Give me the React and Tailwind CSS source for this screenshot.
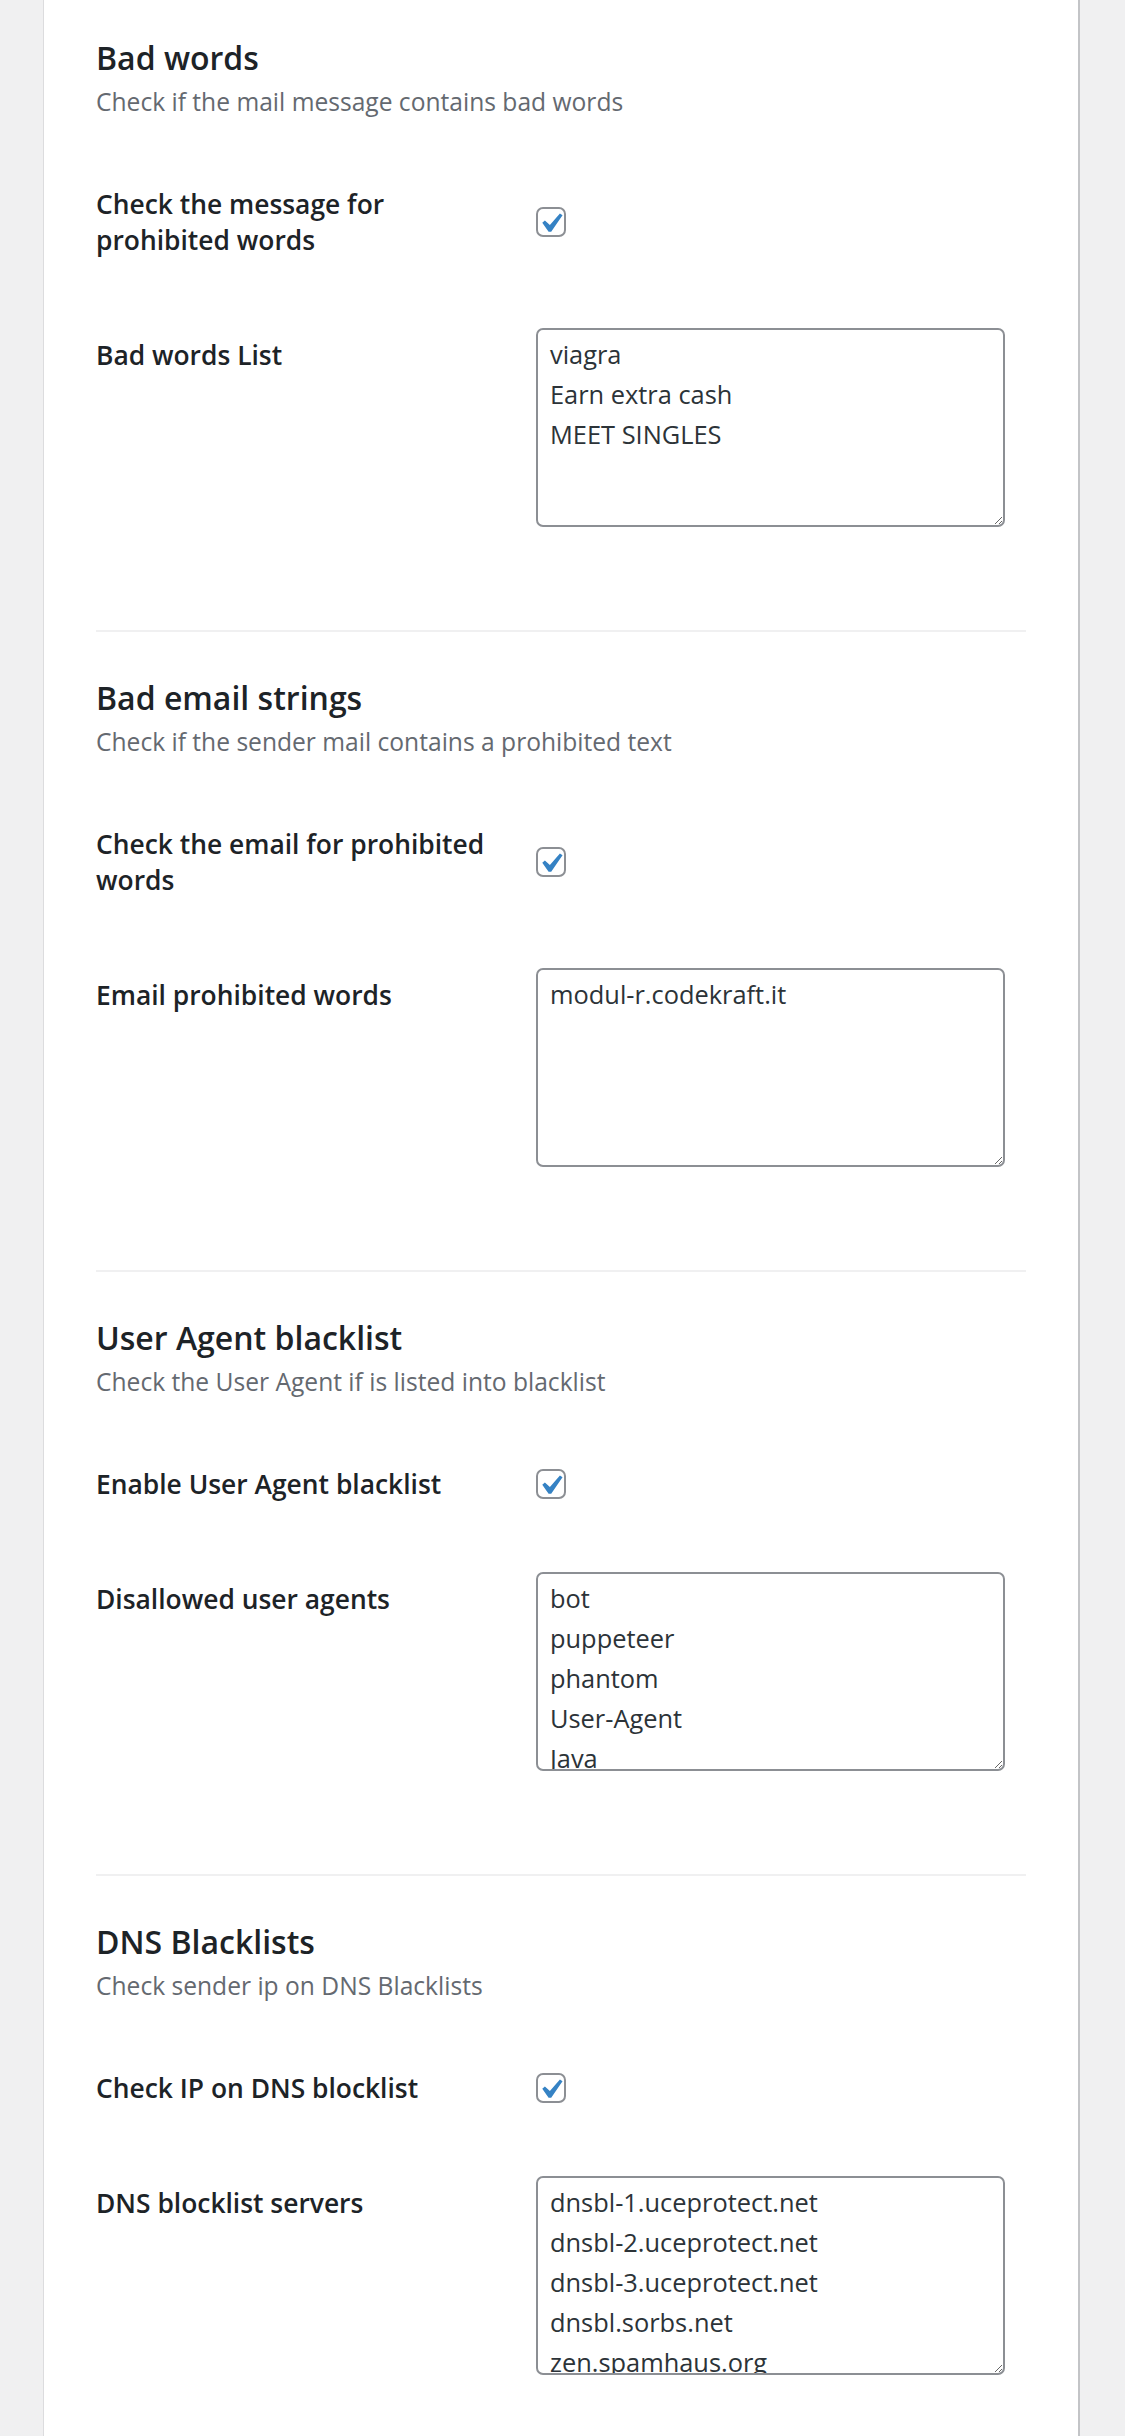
import { useState } from 'react'

const sections = [
    {
        title: 'Bad words',
        description: 'Check if the mail message contains bad words',
        checkLabel: 'Check the message for prohibited words',
        listLabel: 'Bad words List',
        list: ['viagra', 'Earn extra cash', 'MEET SINGLES'],
    },
    {
        title: 'Bad email strings',
        description: 'Check if the sender mail contains a prohibited text',
        checkLabel: 'Check the email for prohibited words',
        listLabel: 'Email prohibited words',
        list: ['modul-r.codekraft.it'],
    },
    {
        title: 'User Agent blacklist',
        description: 'Check the User Agent if is listed into blacklist',
        checkLabel: 'Enable User Agent blacklist',
        listLabel: 'Disallowed user agents',
        list: ['bot', 'puppeteer', 'phantom', 'User-Agent', 'Java', 'curl', 'wget'],
    },
    {
        title: 'DNS Blacklists',
        description: 'Check sender ip on DNS Blacklists',
        checkLabel: 'Check IP on DNS blocklist',
        listLabel: 'DNS blocklist servers',
        list: [
            'dnsbl-1.uceprotect.net',
            'dnsbl-2.uceprotect.net',
            'dnsbl-3.uceprotect.net',
            'dnsbl.sorbs.net',
            'zen.spamhaus.org',
        ],
    },
]

function Checkbox({ checked, onChange }) {
    return (
        <button
            type="button"
            onClick={onChange}
            className="relative block w-[30px] h-[30px] border-2 border-[#8c8f94] rounded-[7px] bg-white"
        >
            {checked && (
                <svg
                    viewBox="0 0 20 20"
                    className="absolute left-[-7px] top-[-5px] w-[39px] h-[39px]"
                >
                    <path
                        d="M14.83 4.89l1.34.94-5.81 8.38H9.02L5.78 9.67l1.34-1.25 2.57 2.4z"
                        fill="#3582c4"
                    />
                </svg>
            )}
        </button>
    )
}

function Section({ section, first }) {
    const [checked, setChecked] = useState(true)
    const [text, setText] = useState(section.list.join('\n'))

    return (
        <div>
            {!first && <div className="mt-[75px] mb-[46px] h-[2px] bg-[#f0f0f1]" />}

            {/* Heading */}
            <h2 className="text-[32px] leading-[40px] font-semibold text-[#1d2327]">
                {section.title}
            </h2>
            <p className="mt-[6px] text-[24.6px] leading-[36px] text-[#646970]">
                {section.description}
            </p>

            {/* Form rows */}
            <div className="mt-[24px]">
                <div className="flex items-center py-[42px]">
                    <div className="w-[440px] shrink-0 pr-[30px]">
                        <div className="text-[26.4px] leading-[36px] font-semibold text-[#1d2327]">
                            {section.checkLabel}
                        </div>
                    </div>
                    <Checkbox checked={checked} onChange={() => setChecked(!checked)} />
                </div>

                <div className="flex items-start">
                    <div className="w-[440px] shrink-0 pr-[30px] pt-[37px]">
                        <div className="text-[26.4px] leading-[36px] font-semibold text-[#1d2327]">
                            {section.listLabel}
                        </div>
                    </div>
                    <div className="py-[28px]">
                        <textarea
                            value={text}
                            onChange={(e) => setText(e.target.value)}
                            className="block w-[469px] h-[199px] overflow-hidden border-2 border-[#8c8f94] rounded-[7px] bg-white px-[12px] py-[4px] text-[25.4px] leading-[40px] text-[#2c3338] focus:outline-none"
                        />
                    </div>
                </div>
            </div>
        </div>
    )
}

export default function App() {
    return (
        <div className="min-h-[2436px] bg-[#f0f0f1] font-['Open_Sans','Noto_Sans',sans-serif]">
            <div className="ml-[43px] w-[1037px] min-h-[2436px] bg-white border-l border-r-2 border-l-[#dcdcde] border-r-[#c3c4c7] px-[52px] pt-[38px] pb-[60px]">
                {sections.map((section, i) => (
                    <Section key={section.title} section={section} first={i === 0} />
                ))}
            </div>
        </div>
    )
}
